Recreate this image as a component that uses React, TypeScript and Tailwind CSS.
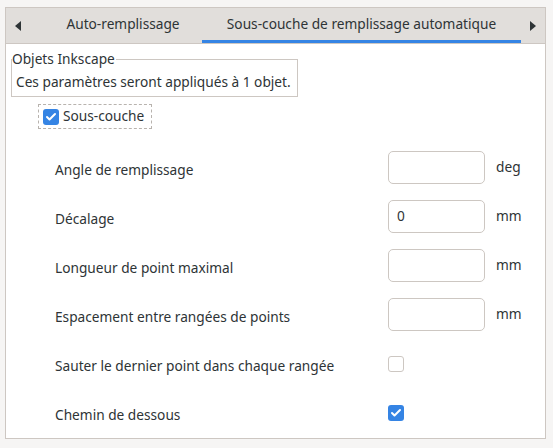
import { Check } from "lucide-react";

function Tick({ checked }: { checked: boolean }) {
  return checked ? (
    <span className="flex h-4 w-4 items-center justify-center rounded-[3px] bg-[#3584e4]">
      <Check size={12} strokeWidth={4} color="white" />
    </span>
  ) : (
    <span className="h-4 w-4 rounded-[3px] border border-[#cdc7c2] bg-white" />
  );
}

function Row({ label, children }: { label: string; children: React.ReactNode }) {
  return (
    <div className="flex h-[33px] items-center">
      <span className="w-[382px] shrink-0 pl-[49px] pt-[5px]">{label}</span>
      {children}
    </div>
  );
}

function Entry({ value, unit }: { value?: string; unit: string }) {
  return (
    <>
      <div className="flex h-[33px] w-[97px] items-center rounded-[5px] border border-[#cdc7c2] bg-white px-[8px]">
        {value}
      </div>
      <span className="ml-[11px]">{unit}</span>
    </>
  );
}

export default function App() {
  return (
    <div className="h-[448px] w-[553px] bg-[#f6f5f4] pl-[5px] pt-[7px] text-[13.7px] text-[#2e3436] [font-family:'Noto_Sans',sans-serif]">
      <div className="h-[432px] w-[541px] border border-[#cdc7c2] bg-white">
        {/* TAB BAR */}
        <div className="flex h-[36px] items-center border-b border-[#cdc7c2] bg-[#e1dedb]">
          <div className="flex w-[38px] pl-[9px]">
            <svg width="6" height="10" viewBox="0 0 6 10">
              <path d="M6 0 L0 5 L6 10 Z" fill="#2e3436" />
            </svg>
          </div>
          <div className="flex h-full w-[158px] items-center justify-center pb-[2px]">
            Auto-remplissage
          </div>
          <div className="flex h-full w-[319px] items-center justify-center border-b-[3px] border-[#3584e4] pt-[1px]">
            Sous-couche de remplissage automatique
          </div>
          <div className="ml-[9px] flex">
            <svg width="6" height="10" viewBox="0 0 6 10">
              <path d="M0 0 L6 5 L0 10 Z" fill="#2e3436" />
            </svg>
          </div>
        </div>
        {/* FRAME */}
        <div className="relative ml-[5px] mt-[15px] h-[38px] w-[287px] border border-[#cdc7c2] px-[4px] pt-[12px]">
          <span className="absolute -top-[10px] left-[0px] bg-white pr-[1px] leading-[18px]">Objets Inkscape</span>
          Ces paramètres seront appliqués à 1 objet.
        </div>
        <div className="ml-[32px] mt-[7px] flex h-[25px] w-[114px] items-center gap-[4px] border border-dashed border-[#b8b3ae] pl-[4px]">
          <Tick checked />
          <span>Sous-couche</span>
        </div>
        {/* OPTIONS */}
        <div className="mt-[22px] flex flex-col gap-[16px]">
          <Row label="Angle de remplissage">
            <Entry unit="deg" />
          </Row>
          <Row label="Décalage">
            <Entry value="0" unit="mm" />
          </Row>
          <Row label="Longueur de point maximal">
            <Entry unit="mm" />
          </Row>
          <Row label="Espacement entre rangées de points">
            <Entry unit="mm" />
          </Row>
          <Row label="Sauter le dernier point dans chaque rangée">
            <Tick checked={false} />
          </Row>
          <Row label="Chemin de dessous">
            <Tick checked />
          </Row>
        </div>
      </div>
    </div>
  );
}
